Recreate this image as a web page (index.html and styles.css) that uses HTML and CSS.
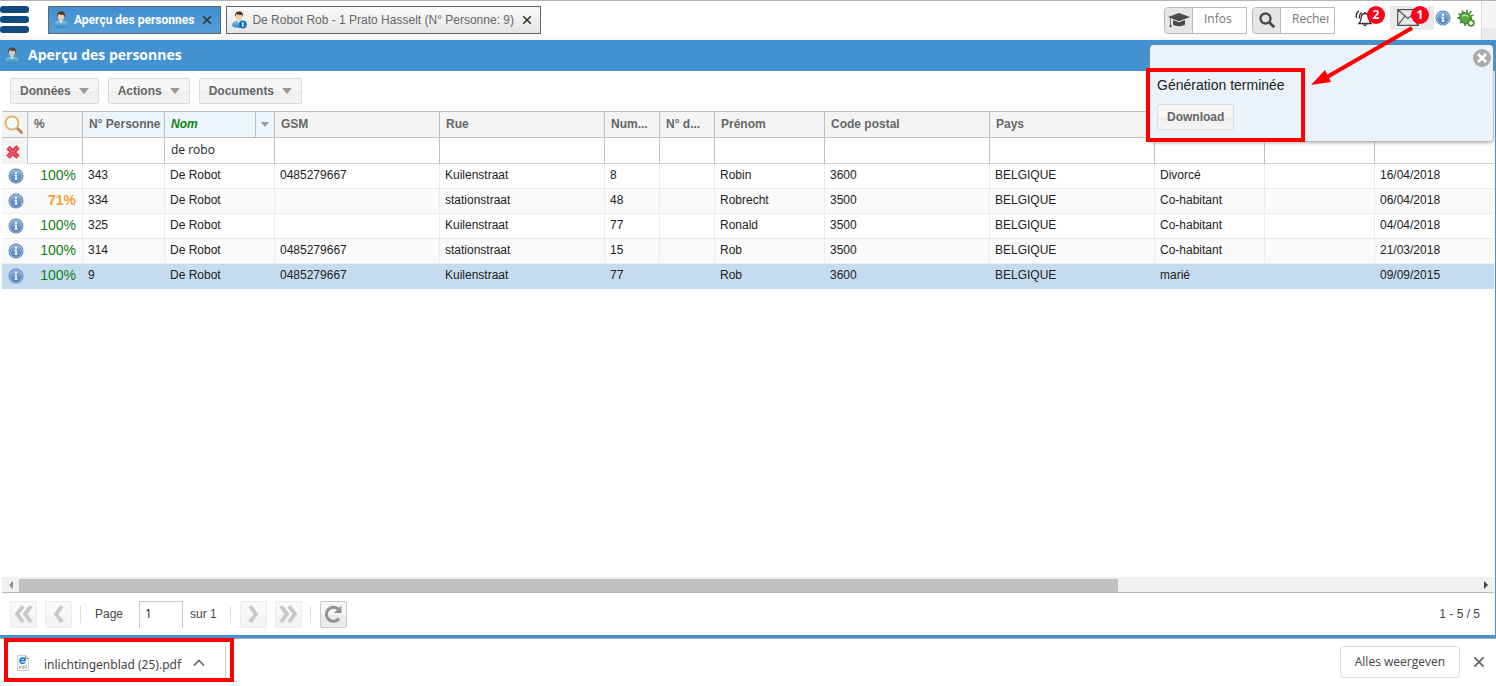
FILE: index.html
```html
<!DOCTYPE html>
<html lang="fr">
<head>
<meta charset="utf-8">
<title>Aperçu des personnes</title>
<link rel="stylesheet" href="styles.css">
</head>
<body>
<svg class="defs" aria-hidden="true">
  <defs>
    <linearGradient id="g-blue" x1="0" y1="0" x2="0" y2="1"><stop offset="0" stop-color="#8fb2da"/><stop offset="1" stop-color="#4a7ab4"/></linearGradient>
    <linearGradient id="g-body" x1="0" y1="0" x2="0" y2="1"><stop offset="0" stop-color="#8ccbe8"/><stop offset="1" stop-color="#2f86b8"/></linearGradient>
    <symbol id="i-info" viewBox="0 0 16 16">
      <circle cx="8" cy="8" r="7.5" fill="#5580b4"/><circle cx="8" cy="8" r="6.6" fill="#b5cbe6"/><circle cx="8" cy="8" r="5.9" fill="url(#g-blue)"/>
      <circle cx="8" cy="4.8" r="1.1" fill="#fff"/><path d="M6.4 6.7h2.4v4h1v1H6.3v-1h1v-3h-.9z" fill="#fff"/>
    </symbol>
    <symbol id="i-person" viewBox="0 0 16 18">
      <path d="M1 14.500C1 11 4 9.800 6 9.500h4c2 .3 5 1.500 5 5C15 17.500 1 17.500 1 14.500z" fill="url(#g-body)"/>
      <path d="M6.500 9.500l1.500 3 1.500-3z" fill="#fff"/><ellipse cx="8" cy="5.500" rx="3" ry="4" fill="#f3cfad"/>
      <path d="M4.200 6C3.500 2 5.500.5 8.200.5c3 0 4.300 2 3.600 5.500l-.8-2C9 4 7 3.800 5.500 3z" fill="#53351f"/>
    </symbol>
    <symbol id="i-cross" viewBox="0 0 10 10"><path d="M1.200 1.200l7.600 7.600M8.800 1.200L1.200 8.800" stroke="currentColor" stroke-width="1.600" fill="none"/></symbol>
  </defs>
</svg>

<div class="app">
  <header class="topbar">
    <button class="burger" aria-label="Menu"><span></span><span></span><span></span></button>
    <nav class="tabs">
      <div class="tab active">
        <svg class="person"><use href="#i-person"/></svg>
        <span>Aperçu des personnes</span>
        <button class="close" aria-label="Fermer"><svg><use href="#i-cross"/></svg></button>
      </div>
      <div class="tab">
        <svg class="person" viewBox="0 0 16 18"><use href="#i-person"/><circle cx="11.800" cy="13.500" r="4" fill="#1b72c4"/><path d="M11.800 11.300v4.400" stroke="#fff" stroke-width="1.300"/></svg>
        <span>De Robot Rob - 1 Prato Hasselt (N° Personne: 9)</span>
        <button class="close" aria-label="Fermer"><svg><use href="#i-cross"/></svg></button>
      </div>
    </nav>
    <div class="tools">
      <label class="field">
        <span class="field-icon"><svg width="22" height="16" viewBox="0 0 22 16"><path d="M11 1L0 5l11 4.200L22 5z" fill="#4c4c4c"/><path d="M5 8v4.500c2 2.300 10 2.300 12 0V8l-6 2.300z" fill="#4c4c4c"/><path d="M2.300 6v6l-1 3h2.400l-.7-3V6.300z" fill="#4c4c4c"/></svg></span>
        <input type="text" placeholder="Infos" aria-label="Infos">
      </label>
      <label class="field">
        <span class="field-icon"><svg width="16" height="16" viewBox="0 0 16 16"><circle cx="6.500" cy="6.500" r="5" fill="none" stroke="#4c4c4c" stroke-width="2.400"/><path d="M10.200 10.200l5 5" stroke="#4c4c4c" stroke-width="3"/></svg></span>
        <input type="text" placeholder="Rechercher" aria-label="Rechercher">
      </label>
      <button class="alert" aria-label="Alertes">
        <svg width="20" height="18" viewBox="0 0 20 18"><g fill="none" stroke="#333" stroke-width="1.300"><path d="M4 14.500c2-2 2-3.500 2.200-6.500C6.500 5.500 8 4.500 10 4.500s3.500 1.500 3.700 3.500c.2 3 .6 4.500 2.300 6.500z"/><path d="M8.500 15c.3 2 2.700 2 3 0M10 4.500V3M4.500 9.500C4 7 4.500 5 6.500 3.500M1.500 9C.8 6 2 3.300 4 2"/></g></svg>
        <span class="badge">2</span>
      </button>
      <button class="alert mail" aria-label="Messages">
        <svg width="22" height="17" viewBox="0 0 22 17"><path d="M.7.700h20.600v15.600H.7zM.7.700L11 9.500 21.300.700M.7 16.300L8 7M21.300 16.300L14 7" fill="none" stroke="#555" stroke-width="1.200"/></svg>
        <span class="badge">1</span>
      </button>
      <button class="plain" aria-label="Informations"><svg width="16" height="16"><use href="#i-info"/></svg></button>
      <button class="plain" aria-label="Signaler un bug">
        <svg width="18" height="18" viewBox="0 0 18 18"><path d="M1.500 4.500L5 7M.5 9h4M3 14l2.500-2M5 1.500L7 5M10 .8v4M16.500 6l-3 1M14.500 2L12 5M8 17v-3" stroke="#4c9a3c" stroke-width="1.800"/><ellipse cx="9" cy="9.500" rx="6.300" ry="5.200" transform="rotate(35 9 9)" fill="#57a944" stroke="#397d2b"/><path d="M5 7.500c2-2 5-1 6 0" stroke="#b7e3a8" stroke-width="1.500" fill="none"/><circle cx="14" cy="14" r="3.300" fill="#6cab4a" stroke="#3b7b25"/><path d="M14 12v4M12 14h4" stroke="#fff" stroke-width="1.400"/></svg>
      </button>
      <span class="edge"></span>
    </div>
  </header>

  <main class="panel">
    <div class="title"><svg class="person"><use href="#i-person"/></svg><h1>Aperçu des personnes</h1></div>
    <div class="toolbar">
      <button class="btn">Données<i class="caret"></i></button>
      <button class="btn">Actions<i class="caret"></i></button>
      <button class="btn">Documents<i class="caret"></i></button>
    </div>
    <div class="grid">
      <table>
        <colgroup><col class="c26"><col class="c55"><col class="c82"><col class="c110"><col class="c165"><col class="c165"><col class="c55"><col class="c55"><col class="c110"><col class="c165"><col class="c165"><col class="c110"><col class="c110"><col></colgroup>
        <thead>
          <tr class="heads">
            <th class="ico"><svg width="20" height="20" viewBox="0 0 20 20"><path d="M13 13l4.500 4.500" stroke="#b98550" stroke-width="3" stroke-linecap="round"/><circle cx="8" cy="8" r="6.600" fill="#f6f8fa" stroke="#e3b068" stroke-width="1.800"/><path d="M5 7c.5-2 2-3 4-3" stroke="#fff" fill="none"/></svg></th>
            <th>%</th><th class="tint">N° Personne</th><th class="tint sorted"><div><span>Nom</span><button aria-label="Options de colonne"><i class="caret"></i></button></div></th><th>GSM</th><th>Rue</th><th>Num...</th><th>N° d...</th><th>Prénom</th><th>Code postal</th><th>Pays</th><th></th><th></th><th></th>
          </tr>
          <tr class="filters">
            <td class="ico"><svg width="16" height="16" viewBox="0 0 16 16"><path d="M3 3.500l10 9.500M13 3L3 13" stroke="#c92b3e" stroke-width="4.600"/><path d="M3 3.500l10 9.500M13 3L3 13" stroke="#ec5362" stroke-width="2.600"/></svg></td>
            <td><input aria-label="%"></td><td><input aria-label="N° Personne"></td><td><input aria-label="Nom" value="de robo"></td><td><input aria-label="GSM"></td><td><input aria-label="Rue"></td><td><input aria-label="Numéro"></td><td><input aria-label="N° de boîte"></td><td><input aria-label="Prénom"></td><td><input aria-label="Code postal"></td><td><input aria-label="Pays"></td><td><input aria-label="État civil"></td><td><input aria-label="Filtre"></td><td><input aria-label="Date"></td>
          </tr>
        </thead>
        <tbody>
          <tr><td class="ico"><svg width="16" height="16"><use href="#i-info"/></svg></td><td class="pct">100%</td><td>343</td><td>De Robot</td><td>0485279667</td><td>Kuilenstraat</td><td>8</td><td></td><td>Robin</td><td>3600</td><td>BELGIQUE</td><td>Divorcé</td><td></td><td>16/04/2018</td></tr>
          <tr><td class="ico"><svg width="16" height="16"><use href="#i-info"/></svg></td><td class="pct mid">71%</td><td>334</td><td>De Robot</td><td></td><td>stationstraat</td><td>48</td><td></td><td>Robrecht</td><td>3500</td><td>BELGIQUE</td><td>Co-habitant</td><td></td><td>06/04/2018</td></tr>
          <tr><td class="ico"><svg width="16" height="16"><use href="#i-info"/></svg></td><td class="pct">100%</td><td>325</td><td>De Robot</td><td></td><td>Kuilenstraat</td><td>77</td><td></td><td>Ronald</td><td>3500</td><td>BELGIQUE</td><td>Co-habitant</td><td></td><td>04/04/2018</td></tr>
          <tr><td class="ico"><svg width="16" height="16"><use href="#i-info"/></svg></td><td class="pct">100%</td><td>314</td><td>De Robot</td><td>0485279667</td><td>stationstraat</td><td>15</td><td></td><td>Rob</td><td>3500</td><td>BELGIQUE</td><td>Co-habitant</td><td></td><td>21/03/2018</td></tr>
          <tr class="selected"><td class="ico"><svg width="16" height="16"><use href="#i-info"/></svg></td><td class="pct">100%</td><td>9</td><td>De Robot</td><td>0485279667</td><td>Kuilenstraat</td><td>77</td><td></td><td>Rob</td><td>3600</td><td>BELGIQUE</td><td>marié</td><td></td><td>09/09/2015</td></tr>
        </tbody>
      </table>
    </div>
    <div class="scroll">
      <button aria-label="Gauche"><svg width="4" height="8" viewBox="0 0 4 8"><path d="M4 0v8L0 4z" fill="#8c8c8c"/></svg></button>
      <div class="track"><div class="thumb"></div></div>
      <button aria-label="Droite"><svg width="4" height="8" viewBox="0 0 4 8"><path d="M0 0v8l4-4z" fill="#444"/></svg></button>
    </div>
    <div class="pager">
      <button class="pg" aria-label="Première page"><svg width="20" height="18" viewBox="0 0 20 18"><path d="M9 1L3 9l6 8M17 1l-6 8 6 8" fill="none" stroke="#c8c8c8" stroke-width="3.800"/></svg></button>
      <button class="pg" aria-label="Page précédente"><svg width="12" height="18" viewBox="0 0 12 18"><path d="M9 1L3 9l6 8" fill="none" stroke="#c8c8c8" stroke-width="3.800"/></svg></button>
      <i class="sep"></i>
      <label for="page">Page</label><input id="page" value="1"><span class="of">sur 1</span>
      <i class="sep"></i>
      <button class="pg" aria-label="Page suivante"><svg width="12" height="18" viewBox="0 0 12 18"><path d="M3 1l6 8-6 8" fill="none" stroke="#c8c8c8" stroke-width="3.800"/></svg></button>
      <button class="pg" aria-label="Dernière page"><svg width="20" height="18" viewBox="0 0 20 18"><path d="M3 1l6 8-6 8M11 1l6 8-6 8" fill="none" stroke="#c8c8c8" stroke-width="3.800"/></svg></button>
      <i class="sep"></i>
      <button class="pg on" aria-label="Actualiser"><svg width="20" height="18" viewBox="0 0 20 18"><path d="M16 13.500A7 7 0 1 1 15 4" fill="none" stroke="#929292" stroke-width="3"/><path d="M18.500.5V8H11z" fill="#929292"/></svg></button>
      <span class="count">1 - 5 / 5</span>
    </div>
  </main>

  <footer class="downloads">
    <div class="file">
      <svg width="12" height="16" viewBox="0 0 12 16"><path d="M.5.500h8l3 3v12H.5z" fill="#fafafa" stroke="#ccc"/><path d="M8.500.500v3h3" fill="none" stroke="#888"/><path d="M3 5.500h5.200C8 2 3 2 3 5.700c0 3 3.500 3 5 1.800" fill="none" stroke="#1779d2" stroke-width="1.500"/><path d="M2.500 14v-3h1.300v1.500H2.500M7 10v3.500H5.500v-2H7M9 14v-3.500h1M8.400 12H10" fill="none" stroke="#999" stroke-width=".7"/></svg>
      <span>inlichtingenblad (25).pdf</span>
      <button aria-label="Plus d'options"><svg width="12" height="8" viewBox="0 0 12 8"><path d="M1 6.500l5-5 5 5" fill="none" stroke="#5f6368" stroke-width="1.600"/></svg></button>
    </div>
    <div class="down-actions">
      <button class="all">Alles weergeven</button>
      <button class="close big" aria-label="Sluiten"><svg><use href="#i-cross"/></svg></button>
    </div>
    <div class="mark mark-file"></div>
  </footer>

  <aside class="toast">
    <p>Génération terminée</p>
    <button class="btn">Download</button>
    <button class="dismiss" aria-label="Fermer"><svg width="18" height="18" viewBox="0 0 18 18"><circle cx="9" cy="9" r="9" fill="#aaa"/><path d="M5 5l8 8M13 5l-8 8" stroke="#fff" stroke-width="2.600"/></svg></button>
    <div class="mark mark-toast"></div>
    <svg class="arrow" width="104" height="64" viewBox="0 0 104 64"><path d="M101 3L16 52" stroke="red" stroke-width="4"/><path d="M0 60l14-15 6 12z" fill="red"/></svg>
  </aside>
</div>
</body>
</html>
```
FILE: styles.css
```css
* { box-sizing: border-box; }
body { margin: 0; background: #fff; font: 12px/16px "Liberation Sans", Arial, sans-serif; color: #222; }
button { border: 0; padding: 0; background: none; font: inherit; color: inherit; cursor: pointer; }
input { font: 12px/16px "Open Sans", sans-serif; border: 0; min-width: 0; outline: 0; color: #222; }
svg { display: block; flex: none; }
.defs { position: absolute; width: 0; height: 0; }
.app { position: relative; min-height: 100vh; display: flex; flex-direction: column; overflow: hidden; }

.topbar { display: flex; align-items: stretch; height: 40px; border-top: 1px solid #b3b3b3; background: linear-gradient(#fff 32px, #f4f4f4); }
.burger { width: 29px; padding: 5px 0 7px; display: flex; flex-direction: column; justify-content: space-between; }
.burger span { height: 7px; background: #114a7f; border-radius: 3px; }
.tabs { display: flex; gap: 5px; margin-left: 19px; align-items: flex-start; padding-top: 5px; }
.tab { display: flex; align-items: center; height: 28px; padding: 0 8px 0 4px; border: 1px solid #666; background: linear-gradient(#fbfbfb, #e4e4e4); color: #666; }
.tab span { margin: 0 8px 0 5px; white-space: nowrap; }
.tab.active { background: linear-gradient(#3f8fd0, #579ed9); color: #fff; font-family: Roboto, sans-serif; font-weight: 700; }
.person { width: 16px; height: 18px; }
.close svg { width: 10px; height: 10px; color: #333; }
.tools { display: flex; align-items: center; margin-left: auto; }
.field { display: flex; width: 83px; height: 27px; margin-right: 5px; border: 1px solid #b9b9b9; border-radius: 4px 0 0 4px; overflow: hidden; background: #fff; }
.field-icon { width: 28px; flex: none; display: flex; align-items: center; justify-content: center; background: #e6e6e6; border-right: 1px solid #b9b9b9; padding-bottom: 2px; }
.field input { width: 54px; padding: 0 5px 3px 0; margin-left: 11px; width: 43px; background: none; }
.field input::placeholder { color: #777; opacity: 1; }
.alert { position: relative; display: flex; align-items: center; width: 34px; height: 24px; padding-left: 4px; margin: 0 2px 6px 11px; }
.alert.mail { width: 44px; padding-left: 7px; background: #e9e9e9; border-radius: 3px; margin-left: 3px; margin-right: 1px; }
.badge { position: absolute; top: 0; left: 16px; width: 18px; height: 18px; border-radius: 9px; background: #ff0019; color: #fff; font: 700 12px/18px "Open Sans", sans-serif; text-align: center; }
.mail .badge { left: 21px; }
.plain { margin: 0 6px 5px 0; }
.edge { align-self: stretch; width: 15px; border-left: 1px solid #ddd; background: linear-gradient(#f5f5f5 70%, #ebebeb 70%); }

.panel { flex: 1; display: flex; flex-direction: column; border-right: 1px solid #4292d2; border-bottom: 3px solid #4292d2; min-width: 0; }
.title { display: flex; align-items: center; gap: 8px; height: 31px; padding-left: 4px; background: #4292d2; }
.title h1 { margin: 0; padding-bottom: 2px; font: 700 14px/20px "Open Sans", sans-serif; color: #fff; }
.title .person { opacity: .85; }
.toolbar { display: flex; gap: 9px; padding: 7px 10px; height: 40px; }
.btn { display: flex; align-items: center; gap: 8px; height: 26px; padding: 0 9px; border: 1px solid #dcdcdc; border-radius: 2px; background: linear-gradient(#f6f6f6 50%, #ededed 50%, #f5f5f5); color: #666; font-weight: 700; }
.caret { border: 5px solid transparent; border-top: 6px solid #999; border-bottom: 0; }
.grid { flex: 1; margin: 0 1px 0 2px; overflow: hidden; }
table { width: 100%; border-collapse: separate; border-spacing: 0; table-layout: fixed; }
.c26 { width: 26px; } .c55 { width: 55px; } .c82 { width: 82px; } .c110 { width: 110px; } .c165 { width: 165px; }
th, td { height: 25px; padding: 0 5px; border-right: 1px solid #ececec; border-bottom: 1px solid #ececec; text-align: left; white-space: nowrap; overflow: hidden; text-overflow: ellipsis; }
th:last-child, td:last-child { border-right: 0; }
th { height: 27px; border-color: #c0c0c0; border-top: 1px solid #c0c0c0; background: #f4f4f4; color: #666; padding: 0 3px 2px 6px; }
th.tint { background: #ecf4fc; }
th.sorted { padding: 0 0 0 6px; font-style: italic; color: #128012; }
.sorted div { display: flex; justify-content: space-between; align-items: stretch; }
.sorted span { line-height: 25px; }
.sorted button { width: 19px; height: 25px; border-left: 1px solid #c0c0c0; display: flex; align-items: center; justify-content: center; }
.sorted .caret { border-width: 5px 4px 0; }
.filters td { height: 26px; padding: 0; border-right-color: #c0c0c0; border-bottom-color: #d0d0d0; }
.filters input { display: block; width: 100%; height: 24px; padding: 0 6px 3px; background: none; }
tbody tr:nth-child(even) { background: #fafafa; }
tbody .selected { background: #c5dcf0; }
.selected td { border-color: #c5dcf0; }
tbody td { padding-bottom: 2px; }
.ico, .filters .ico { padding: 0 0 0 6px; text-overflow: clip; }
th.ico { padding-left: 2px; }
.filters .ico { padding: 2px 0 0 3px; background: #f4f4f4; border-bottom-color: #f4f4f4; }
tbody .ico { border-right-color: transparent; }
.pct { text-align: right; font-size: 14px; color: #128012; padding-right: 6px; }
.pct.mid { color: #f5a033; font-weight: 700; }
.scroll { display: flex; height: 16px; margin: 0 1px 0 2px; background: #f0f0f0; border-bottom: 1px solid #b8b8b8; }
.scroll button { width: 17px; display: flex; align-items: center; justify-content: center; }
.track { flex: 1; padding-top: 2px; }
.thumb { width: 75.4%; height: 13px; background: #c1c1c1; }
.pager { display: flex; align-items: center; height: 42px; padding: 0 15px 0 10px; color: #444; }
.pg { width: 27px; height: 27px; margin-right: 8px; display: flex; align-items: center; justify-content: center; border: 1px solid #ececec; border-radius: 2px; background: linear-gradient(#f9f9f9 50%, #f4f4f4 50%); }
.pg.on { border-color: #ccc; background: linear-gradient(#f6f6f6 50%, #ebebeb 50%); margin: 0; }
.sep { width: 1px; height: 17px; margin-right: 9px; background: #dcdcdc; }
.pager label { margin: 0 16px 0 5px; }
.pager input { width: 44px; height: 27px; padding: 0 5px 3px; border: solid #c8c8c8; border-width: 1px 1px 0 1px; }
.of { margin: 0 13px 0 7px; }
.count { margin-left: auto; }

.downloads { position: relative; display: flex; align-items: center; height: 48px; border-top: 1px solid #aaa; font: 12px/18px "Open Sans", sans-serif; color: #444; }
.file { display: flex; align-items: center; height: 34px; width: 226px; padding: 4px 0 0 17px; border-right: 1px solid #ccc; }
.file svg { margin-bottom: 4px; }
.file span { margin: 0 12px 0 15px; font-family: "Noto Sans", sans-serif; white-space: nowrap; }
.down-actions { display: flex; align-items: center; gap: 13px; margin-left: auto; padding: 0 11px 2px 0; }
.all { height: 32px; padding: 0 14px; border: 1px solid #dadce0; border-radius: 4px; font-weight: 500; }
.big svg { width: 12px; height: 12px; color: #666; }

.toast { position: absolute; top: 45px; right: 3px; width: 343px; height: 96px; padding: 32px 7px 0; background: #eaf2fb; border-radius: 4px; box-shadow: 0 1px 4px #888; }
.toast p { margin: 0 0 11px; font-size: 14px; line-height: 16px; color: #222; }
.dismiss { position: absolute; top: 4px; right: 2px; }
.mark { position: absolute; border: 4px solid red; pointer-events: none; }
.mark-toast { left: -4px; top: 23px; width: 159px; height: 74px; }
.mark-file { left: 4px; top: -1px; width: 230px; height: 44px; }
.arrow { position: absolute; left: 161px; top: -20px; pointer-events: none; }
```
